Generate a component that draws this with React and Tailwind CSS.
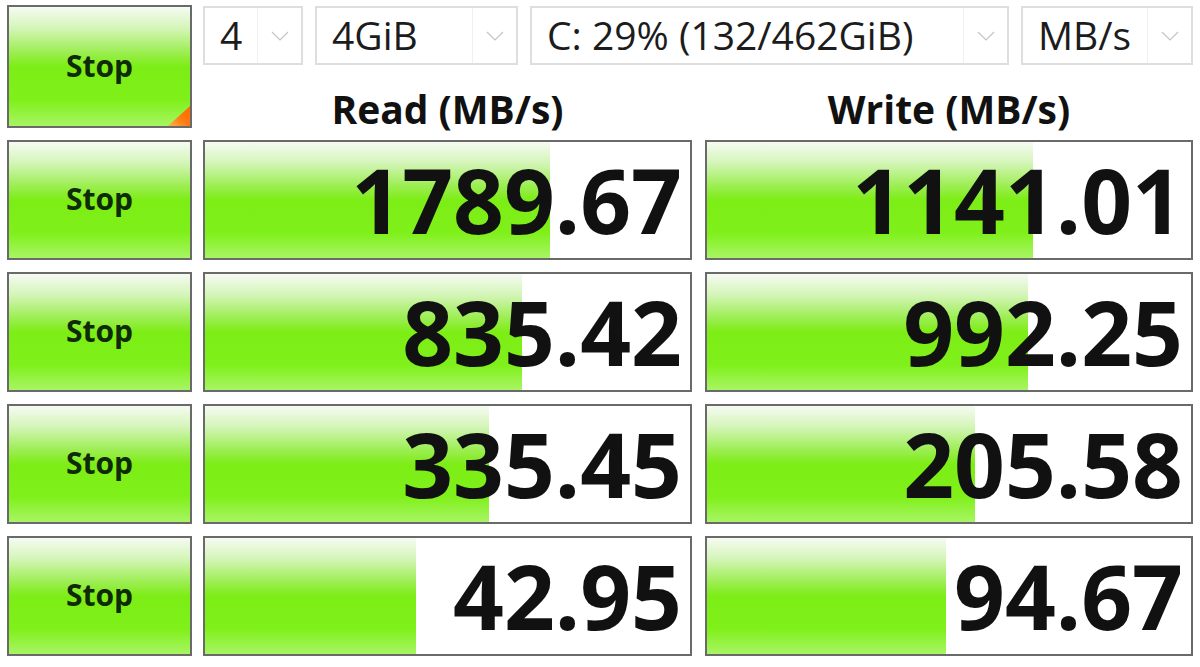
import React from "react";

const font = { fontFamily: '"Open Sans", "Noto Sans", "Liberation Sans", sans-serif' };

const green =
  "bg-[linear-gradient(180deg,#f6fbf2_0%,#d4f5b8_18%,#9cee52_38%,#7ded16_50%,#7ff019_78%,#a8f564_100%)]";

function StopButton({ corner, className = "" }) {
  return (
    <div
      className={`relative flex items-center justify-center border-2 border-[#6a6a6a] ${green} ${className}`}
    >
      <span className="text-[30px] font-bold text-[#0f2a06] leading-none -mt-[2px]">Stop</span>
      {corner && (
        <svg className="absolute right-0 bottom-0" width="22" height="20" viewBox="0 0 22 20">
          <defs>
            <linearGradient id="og" x1="0" y1="1" x2="1" y2="0">
              <stop offset="0" stopColor="#ffb347" />
              <stop offset="0.5" stopColor="#ff7a10" />
              <stop offset="1" stopColor="#ff6a00" />
            </linearGradient>
          </defs>
          <polygon points="22,0 22,20 0,20" fill="url(#og)" />
        </svg>
      )}
    </div>
  );
}

function Select({ label, className = "" }) {
  return (
    <div className={`relative flex items-center h-full border-2 border-[#dedede] bg-white ${className}`}>
      <span className="pl-[15px] text-[39px] text-[#1c1c1c] leading-none whitespace-nowrap -mt-[3px]">{label}</span>
      <div className="ml-auto flex items-center justify-center w-[44px] h-full border-l border-[#f0f0f0]">
        <svg width="18" height="10" viewBox="0 0 18 10">
          <polyline points="1,1 9,9 17,1" fill="none" stroke="#c4c4c4" strokeWidth="1.2" />
        </svg>
      </div>
    </div>
  );
}

function Cell({ value, bar }) {
  return (
    <div className="relative flex items-center justify-end h-full border-2 border-[#6a6a6a] bg-white">
      <div className={`absolute left-0 top-0 bottom-0 ${green}`} style={{ width: bar }} />
      <span className="relative pr-[8px] text-[89px] font-bold text-[#111111] leading-none -mt-[2px]">
        {value}
      </span>
    </div>
  );
}

const rows = [
  ["1789.67", 345, "1141.01", 326],
  ["835.42", 317, "992.25", 321],
  ["335.45", 284, "205.58", 268],
  ["42.95", 211, "94.67", 239],
];

export default function App() {
  return (
    <div className="w-[1200px] h-[667px] bg-white overflow-hidden pt-[5px] pl-[7px]" style={font}>
      <div className="flex h-[123px]">
        <StopButton corner className="w-[185px] h-full" />
        <div className="ml-[11px] w-[990px] flex flex-col">
          <div className="flex gap-[12px] h-[60px] mt-[1px]">
            <Select label="4" className="w-[100px]" />
            <Select label="4GiB" className="w-[203px]" />
            <Select label="C: 29% (132/462GiB)" className="w-[479px]" />
            <Select label="MB/s" className="w-[172px]" />
          </div>
          <div className="flex flex-1 items-center">
            <div className="w-[489px] text-center text-[39px] font-bold text-[#111] leading-none mt-[24px]">Read (MB/s)</div>
            <div className="ml-[13px] w-[488px] text-center text-[39px] font-bold text-[#111] leading-none mt-[24px]">Write (MB/s)</div>
          </div>
        </div>
      </div>
      <div className="flex flex-col gap-[12px] mt-[12px]">
        {rows.map(([r, rb, w, wb], i) => (
          <div key={i} className="flex h-[120px]">
            <StopButton className="w-[185px] h-full" />
            <div className="ml-[11px] w-[489px] h-full">
              <Cell value={r} bar={rb} />
            </div>
            <div className="ml-[13px] w-[488px] h-full">
              <Cell value={w} bar={wb} />
            </div>
          </div>
        ))}
      </div>
    </div>
  );
}
